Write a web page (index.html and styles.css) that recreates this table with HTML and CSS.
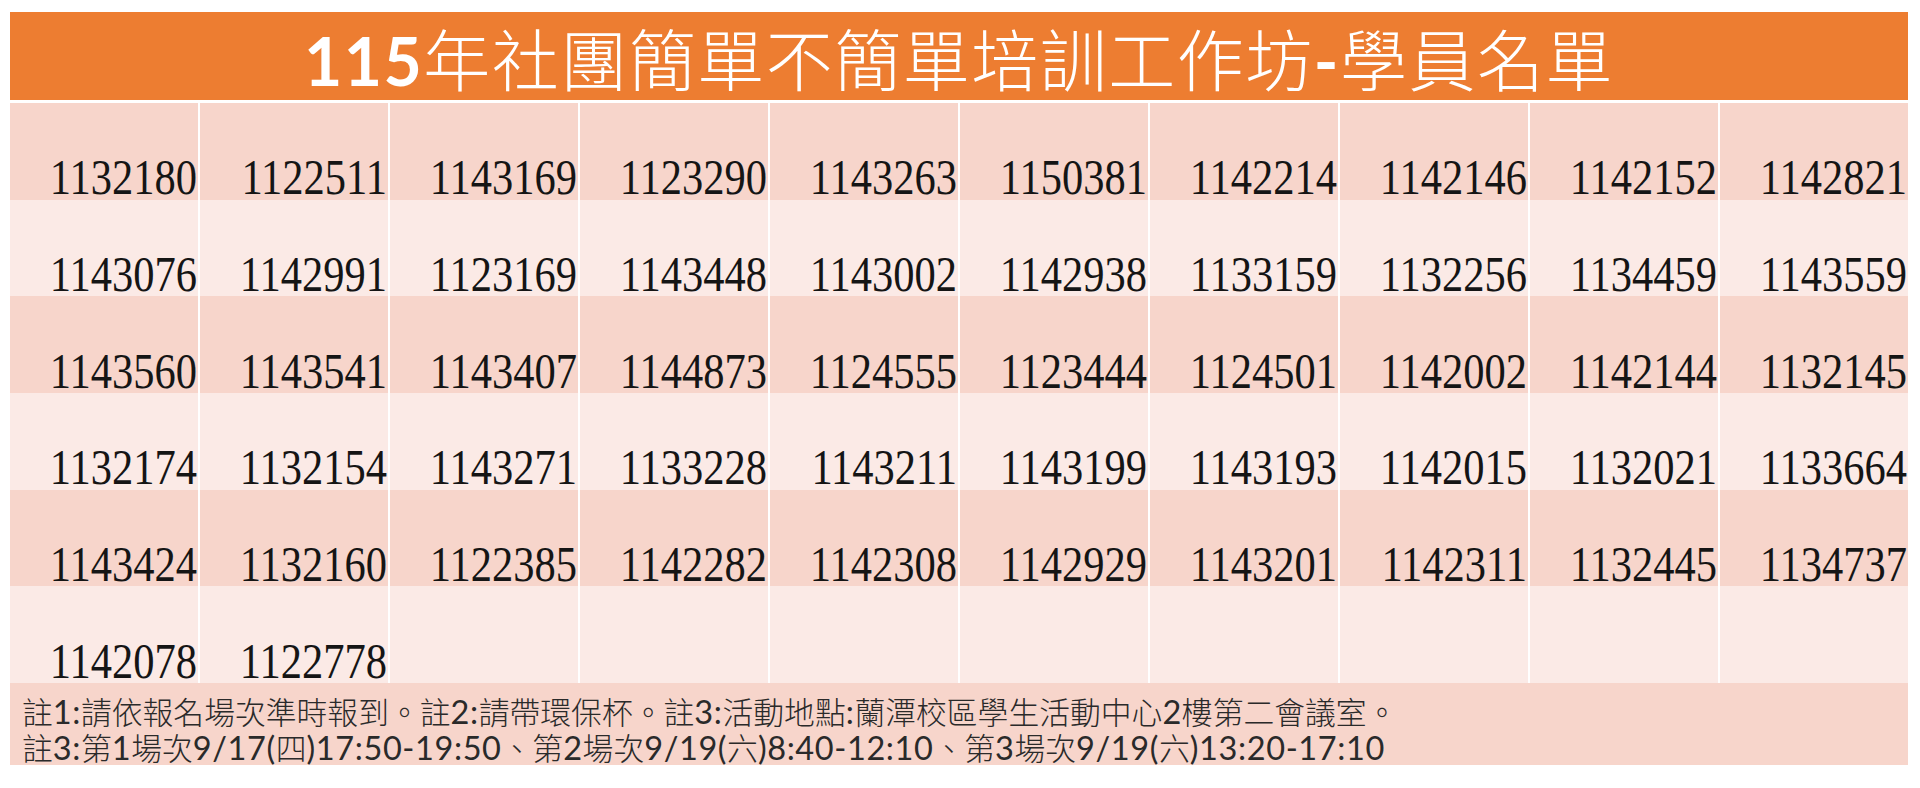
FILE: index.html
```html
<!DOCTYPE html>
<html lang="zh-Hant">
<head>
<meta charset="utf-8">
<title>115年社團簡單不簡單培訓工作坊-學員名單</title>
<link rel="stylesheet" href="styles.css">
</head>
<body>
<div class="sheet">
  <div class="title"><span class="latin">115</span>年社團簡單不簡單培訓工作坊<span class="latin">-</span>學員名單</div>
  <div class="grid">
    <div class="cell odd"><span>1132180</span></div>
    <div class="cell odd"><span>1122511</span></div>
    <div class="cell odd"><span>1143169</span></div>
    <div class="cell odd"><span>1123290</span></div>
    <div class="cell odd"><span>1143263</span></div>
    <div class="cell odd"><span>1150381</span></div>
    <div class="cell odd"><span>1142214</span></div>
    <div class="cell odd"><span>1142146</span></div>
    <div class="cell odd"><span>1142152</span></div>
    <div class="cell odd"><span>1142821</span></div>

    <div class="cell even"><span>1143076</span></div>
    <div class="cell even"><span>1142991</span></div>
    <div class="cell even"><span>1123169</span></div>
    <div class="cell even"><span>1143448</span></div>
    <div class="cell even"><span>1143002</span></div>
    <div class="cell even"><span>1142938</span></div>
    <div class="cell even"><span>1133159</span></div>
    <div class="cell even"><span>1132256</span></div>
    <div class="cell even"><span>1134459</span></div>
    <div class="cell even"><span>1143559</span></div>

    <div class="cell odd"><span>1143560</span></div>
    <div class="cell odd"><span>1143541</span></div>
    <div class="cell odd"><span>1143407</span></div>
    <div class="cell odd"><span>1144873</span></div>
    <div class="cell odd"><span>1124555</span></div>
    <div class="cell odd"><span>1123444</span></div>
    <div class="cell odd"><span>1124501</span></div>
    <div class="cell odd"><span>1142002</span></div>
    <div class="cell odd"><span>1142144</span></div>
    <div class="cell odd"><span>1132145</span></div>

    <div class="cell even"><span>1132174</span></div>
    <div class="cell even"><span>1132154</span></div>
    <div class="cell even"><span>1143271</span></div>
    <div class="cell even"><span>1133228</span></div>
    <div class="cell even"><span>1143211</span></div>
    <div class="cell even"><span>1143199</span></div>
    <div class="cell even"><span>1143193</span></div>
    <div class="cell even"><span>1142015</span></div>
    <div class="cell even"><span>1132021</span></div>
    <div class="cell even"><span>1133664</span></div>

    <div class="cell odd"><span>1143424</span></div>
    <div class="cell odd"><span>1132160</span></div>
    <div class="cell odd"><span>1122385</span></div>
    <div class="cell odd"><span>1142282</span></div>
    <div class="cell odd"><span>1142308</span></div>
    <div class="cell odd"><span>1142929</span></div>
    <div class="cell odd"><span>1143201</span></div>
    <div class="cell odd"><span>1142311</span></div>
    <div class="cell odd"><span>1132445</span></div>
    <div class="cell odd"><span>1134737</span></div>

    <div class="cell even"><span>1142078</span></div>
    <div class="cell even"><span>1122778</span></div>
    <div class="cell even"></div>
    <div class="cell even"></div>
    <div class="cell even"></div>
    <div class="cell even"></div>
    <div class="cell even"></div>
    <div class="cell even"></div>
    <div class="cell even"></div>
    <div class="cell even"></div>
  </div>
  <div class="notes">
    <p>註<span class="latin">1:</span>請依報名場次準時報到。註<span class="latin">2:</span>請帶環保杯。註<span class="latin">3:</span>活動地點<span class="latin">:</span>蘭潭校區學生活動中心<span class="latin">2</span>樓第二會議室。</p>
    <p>註<span class="latin">3:</span>第<span class="latin">1</span>場次<span class="latin">9/17(</span>四<span class="latin">)17:50-19:50</span>、第<span class="latin">2</span>場次<span class="latin">9/19(</span>六<span class="latin">)8:40-12:10</span>、第<span class="latin">3</span>場次<span class="latin">9/19(</span>六<span class="latin">)13:20-17:10</span></p>
  </div>
</div>
</body>
</html>
```
FILE: styles.css
```css
html, body {
  margin: 0;
  padding: 0;
  background: #ffffff;
}

.sheet {
  width: 1898px;
  margin: 12px 0 0 10px;
  display: flex;
  flex-direction: column;
}

.title {
  height: 88px;
  background: #ed7d31;
  color: #ffffff;
  font-family: "Noto Sans CJK TC", "Noto Sans", sans-serif;
  font-weight: 300;
  font-size: 67px;
  line-height: 90px;
  text-align: center;
  letter-spacing: 1.5px;
}

.title .latin {
  font-family: "Lato", "Noto Sans", sans-serif;
  font-weight: 700;
  font-size: 66px;
}

.grid {
  margin-top: 3px;
  display: grid;
  grid-template-columns: repeat(10, 1fr);
  grid-auto-rows: 96.7px;
  column-gap: 2px;
  background: #ffffff;
}

.cell {
  display: flex;
  align-items: flex-end;
  justify-content: flex-end;
  padding: 0 1px 0 0;
}

.cell.odd {
  background: #f7d5cb;
}

.cell.even {
  background: #fbeae6;
}

.cell span {
  font-family: "Liberation Serif", "Times New Roman", serif;
  font-size: 42.5px;
  line-height: 1;
  color: #151515;
  display: inline-block;
  transform: scaleY(1.18);
  transform-origin: 50% 100%;
  margin-bottom: -3px;
}

.notes {
  background: #f7d5cb;
  height: 82px;
  padding: 10px 0 0 12px;
  box-sizing: border-box;
  font-family: "Noto Sans CJK TC", "Noto Sans", sans-serif;
  font-weight: 300;
  font-size: 30.8px;
  color: #2a2a2a;
}

.notes p {
  margin: 0;
  line-height: 35px;
  white-space: nowrap;
}

.notes .latin {
  font-family: "Lato", "Noto Sans", sans-serif;
  font-weight: 400;
  font-size: 32.5px;
  letter-spacing: 0.6px;
}
```
